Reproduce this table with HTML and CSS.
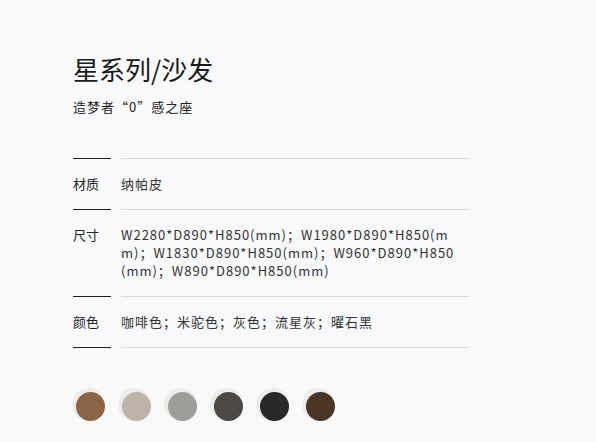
FILE: index.html
```html
<!DOCTYPE html>
<html lang="zh">
<head>
<meta charset="utf-8">
<link rel="stylesheet" href="styles.css">
</head>
<body>
<div class="page">
  <h1 class="title">星系列/沙发</h1>
  <p class="subtitle">造梦者“0”感之座</p>
  <div class="specs">
    <div class="row">
      <div class="label">材质</div>
      <div class="value">纳帕皮</div>
    </div>
    <div class="row">
      <div class="label">尺寸</div>
      <div class="value">W2280*D890*H850(mm)；W1980*D890*H850(mm)；W1830*D890*H850(mm)；W960*D890*H850(mm)；W890*D890*H850(mm)</div>
    </div>
    <div class="row">
      <div class="label">颜色</div>
      <div class="value">咖啡色；米驼色；灰色；流星灰；曜石黑</div>
    </div>
    <div class="row end">
      <div class="label"></div>
      <div class="value"></div>
    </div>
  </div>
  <div class="swatches">
    <span class="swatch c1"></span>
    <span class="swatch c2"></span>
    <span class="swatch c3"></span>
    <span class="swatch c4"></span>
    <span class="swatch c5"></span>
    <span class="swatch c6"></span>
  </div>
</div>
</body>
</html>
```
FILE: styles.css
```css
html, body {
  margin: 0;
  padding: 0;
  background: #f8f9fb;
}
body {
  font-family: "Noto Sans CJK SC", "Noto Sans", sans-serif;
  color: #222;
}
.page {
  padding: 50px 0 0 73px;
  width: 396px;
}
.title {
  margin: 0;
  font-size: 26px;
  font-weight: 400;
  line-height: 38px;
  color: #1a1a1a;
}
.subtitle {
  margin: 10px 0 0;
  font-size: 13px;
  line-height: 18px;
  letter-spacing: 1px;
  color: #222;
}
.specs {
  margin-top: 42px;
}
.row {
  display: grid;
  grid-template-columns: 38px 1fr;
  column-gap: 10px;
}
.label {
  border-top: 1px solid #1e1e1e;
  padding: 16px 0 16px;
  font-size: 13px;
  line-height: 18px;
  color: #222;
  white-space: nowrap;
}
.value {
  border-top: 1px solid #dadada;
  padding: 16px 0 16px;
  font-size: 13px;
  line-height: 18px;
  letter-spacing: 1px;
  color: #333;
  word-break: break-all;
}
.row.end .label,
.row.end .value {
  padding: 0;
  height: 0;
}
.swatches {
  display: flex;
  gap: 17px;
  margin-top: 44px;
  padding-left: 3px;
}
.swatch {
  width: 29px;
  height: 29px;
  border-radius: 50%;
  box-shadow: -2px -2px 1px 2px #ececec;
}
.c1 { background: #8a6445; }
.c2 { background: #bdb4a7; }
.c3 { background: #a09e9b; }
.c4 { background: #4b4845; }
.c5 { background: #2a2928; }
.c6 { background: #4a3625; }
```
